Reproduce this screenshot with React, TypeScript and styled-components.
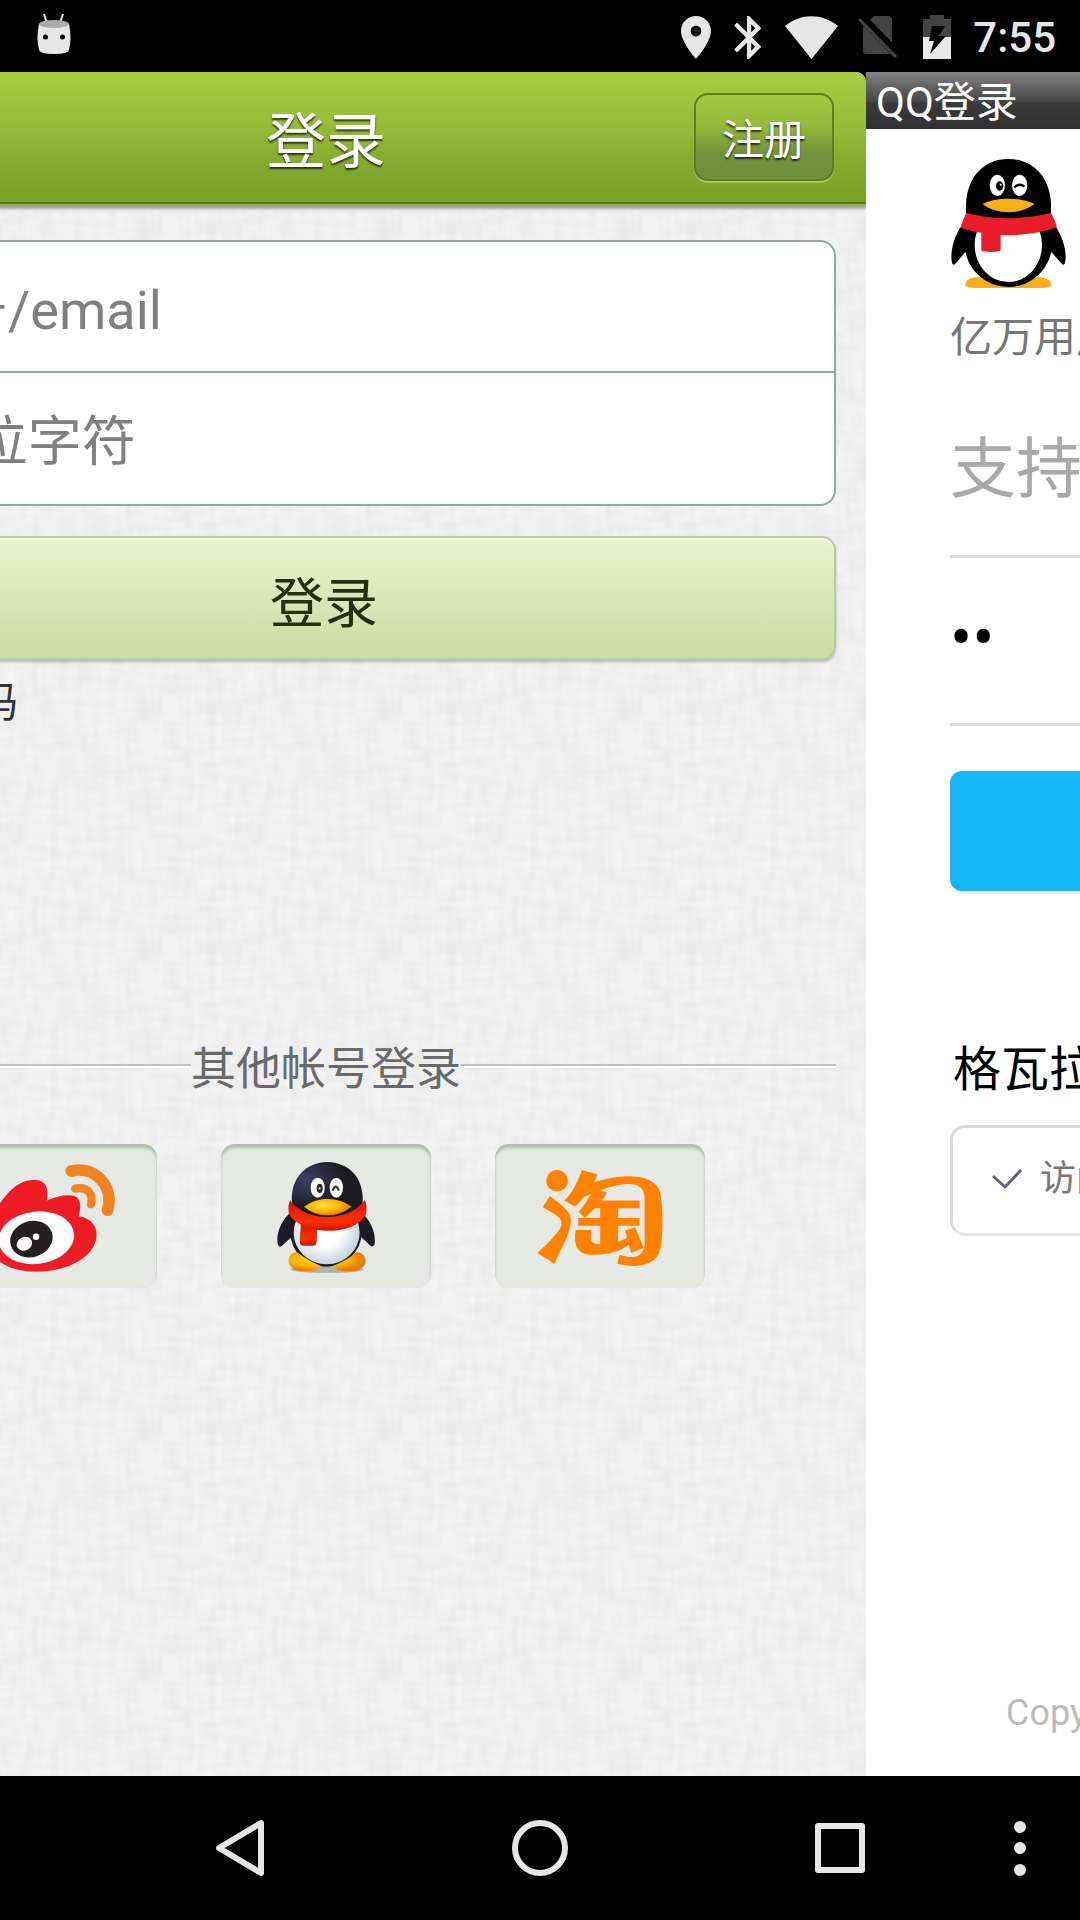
import React from "react";
import styled, { createGlobalStyle } from "styled-components";
import { AiOutlineTaobao } from "react-icons/ai";

const thread = (fx: string, fy: string, id: string) =>
  `<filter id='${id}' x='0' y='0' width='100%' height='100%'><feTurbulence type='fractalNoise' baseFrequency='${fx} ${fy}' numOctaves='2' seed='4' stitchTiles='stitch'/><feColorMatrix values='0 0 0 0 0  0 0 0 0 0  0 0 0 0 0  0.05 0 0 0 -0.015'/></filter><rect width='240' height='240' filter='url(#${id})'/>`;

const linen = `url("data:image/svg+xml,${encodeURIComponent(
  `<svg xmlns='http://www.w3.org/2000/svg' width='240' height='240'>${thread("0.03", "0.12", "h")}${thread("0.12", "0.03", "v")}</svg>`
).replace(/'/g, "%27")}")`;

const Global = createGlobalStyle`
  *, *::before, *::after { box-sizing: border-box; }
  html, body, #root { height: 100%; }
  body {
    margin: 0;
    background: #000;
    overflow: hidden;
    font-family: Roboto, "Noto Sans CJK SC", sans-serif;
  }
  button, input { font-family: inherit; }
  svg { display: block; flex: none; }
`;

const Screen = styled.div`
  display: flex;
  flex-direction: column;
  height: 100%;
  overflow: hidden;
`;

const StatusBar = styled.header`
  flex: none;
  display: flex;
  align-items: center;
  justify-content: space-between;
  height: 72px;
  padding: 2px 24px 0 36px;
  background: #000;
`;

const StatusGroup = styled.div`
  display: flex;
  align-items: center;
  gap: 20px;
`;

const Clock = styled.time`
  padding-top: 2px;
  color: #e6e6e6;
  font-size: 42px;
  font-weight: 500;
  line-height: 50px;
`;

const Stage = styled.main`
  flex: 1;
  min-height: 0;
  display: flex;
  overflow: hidden;
  background: #000;
`;

const Page = styled.section`
  flex: 0 0 100%;
  min-width: 0;
  display: flex;
  flex-direction: column;
  overflow: hidden;
`;

const LoginPage = styled(Page)`
  margin-left: -214px;
  border-radius: 0 10px 0 0;
  background: #f4f4f4 ${linen};
`;

const NavHeader = styled.div`
  flex: none;
  display: grid;
  grid-template-columns: 1fr auto 1fr;
  align-items: center;
  height: 134px;
  padding: 0 32px 4px;
  background: linear-gradient(#a7cc44, #9ac03b 32%, #81a92d 72%, #79a027);
  box-shadow: inset 0 -2px #98b83c, inset 0 -4px #557a14, 0 2px 2px #9c9c9c,
    0 4px 2px #cfcfcf;
`;

const NavTitle = styled.h1`
  grid-column: 2;
  margin: 0;
  padding-top: 12px;
  color: #fff;
  font-size: 60px;
  font-weight: 400;
  line-height: 72px;
  text-shadow: 0 2px 2px rgba(0, 0, 0, 0.7);
`;

const RegisterButton = styled.button`
  justify-self: end;
  width: 140px;
  height: 88px;
  padding: 8px 0 0;
  border: 2px solid #5c8217;
  border-radius: 14px;
  background: linear-gradient(#a3c941, #96bb3b 35%, #73933f 68%, #6a9238);
  box-shadow: 0 2px 1px #a9c56a;
  color: #fff;
  font-size: 42px;
  line-height: 50px;
  text-shadow: 0 2px 2px rgba(0, 0, 0, 0.7);
`;

const LoginForm = styled.form`
  display: flex;
  flex-direction: column;
  padding: 34px 30px 0;
`;

const Fields = styled.div`
  display: flex;
  flex-direction: column;
  border: 2px solid #90aa9f;
  border-radius: 16px;
  background: #fff;
  overflow: hidden;
`;

const Field = styled.input`
  height: 131px;
  padding: 7px 28px 0;
  border: 0;
  background: transparent;
  color: #333;
  font-size: 54px;
  outline: 0;
  &:first-child {
    border-bottom: 2px solid #90aa9f;
  }
  &::placeholder {
    color: #808080;
    opacity: 1;
  }
`;

const SubmitButton = styled.button`
  height: 124px;
  margin-top: 30px;
  padding: 14px 4px 0 0;
  border: 2px solid #bccb98;
  border-radius: 14px;
  background: linear-gradient(#e7f2cd, #dfecc0 30%, #cddea6 90%);
  box-shadow: inset 0 2px #f8fbef, 0 2px 3px rgba(0, 0, 0, 0.25);
  color: #263010;
  font-size: 54px;
  line-height: 60px;
`;

const ForgotLink = styled.a`
  align-self: flex-start;
  margin: 18px 0 0 34px;
  color: #333;
  font-size: 42px;
  line-height: 50px;
  text-decoration: none;
`;

const Divider = styled.div`
  display: flex;
  align-items: center;
  margin: 309px 30px 0;
  &::before,
  &::after {
    content: "";
    flex: 1;
    height: 4px;
    border-top: 2px solid #b9c6bd;
    border-bottom: 2px solid #fff;
  }
`;

const DividerText = styled.span`
  padding-top: 8px;
  color: #6a6a6a;
  font-size: 45px;
  line-height: 50px;
`;

const Providers = styled.div`
  display: flex;
  justify-content: center;
  gap: 64px;
  margin-top: 49px;
`;

const ProviderButton = styled.button`
  display: flex;
  align-items: center;
  justify-content: center;
  width: 210px;
  height: 144px;
  padding: 4px 0 0;
  border: 0;
  border-radius: 14px;
  background: #e6e9e3;
  box-shadow: inset 0 4px 3px #b3c0af, inset 0 0 2px #d9ddd6;
  color: #ff8200;
`;

const QQPage = styled(Page)`
  background: #fff;
`;

const TitleBar = styled.h2`
  flex: none;
  margin: 0;
  padding: 4px 0 0 10px;
  background: linear-gradient(#868686, #6a6a6a 20%, #464646 52%, #3a3a3a 54%, #313131);
  color: #fff;
  font-size: 42px;
  font-weight: 400;
  line-height: 53px;
`;

const QQBody = styled.form`
  flex: 1;
  display: flex;
  flex-direction: column;
  padding: 30px 84px 38px;
`;

const Slogan = styled.p`
  margin: 25px 0 0;
  color: #777;
  font-size: 42px;
  line-height: 50px;
  white-space: nowrap;
`;

const AccountField = styled.input`
  flex: none;
  height: 195px;
  padding: 20px 0 0;
  border: 0;
  border-bottom: 3px solid #ddd;
  background: transparent;
  color: #000;
  font-size: 66px;
  outline: 0;
  &::placeholder {
    color: #a9a9a9;
    opacity: 1;
  }
`;

const PasswordField = styled(AccountField)`
  height: 168px;
  padding: 0 0 4px;
`;

const BlueButton = styled.button`
  flex: none;
  height: 120px;
  margin-top: 45px;
  border: 0;
  border-radius: 12px;
  background: #14b7f8;
  color: #fff;
  font-size: 54px;
`;

const GrantTitle = styled.h3`
  margin: 149px 0 0 3px;
  color: #000;
  font-size: 48px;
  font-weight: 400;
  line-height: 60px;
  white-space: nowrap;
`;

const GrantBox = styled.label`
  flex: none;
  display: flex;
  align-items: center;
  gap: 18px;
  height: 111px;
  margin-top: 25px;
  padding: 0 0 4px 39px;
  border: 3px solid #d9d9d9;
  border-bottom-color: #e3e3e3;
  border-radius: 15px;
  color: #777;
  font-size: 36px;
  line-height: 42px;
  white-space: nowrap;
`;

const HiddenCheck = styled.input`
  position: absolute;
  opacity: 0;
  pointer-events: none;
`;

const Copyright = styled.p`
  margin: auto 0 0;
  padding-left: 56px;
  color: #bbb;
  font-size: 36px;
  line-height: 50px;
  white-space: nowrap;
`;

const SystemNav = styled.nav`
  flex: none;
  display: flex;
  height: 144px;
  padding: 0 30px 0 90px;
  background: #000;
`;

const NavKey = styled.button<{ $narrow?: boolean }>`
  flex: ${(p) => (p.$narrow ? "0 0 60px" : "1")};
  display: flex;
  align-items: center;
  justify-content: center;
  padding: 0;
  border: 0;
  background: transparent;
`;

const RobotIcon = () => (
  <svg width="36" height="48" viewBox="0 0 36 48">
    <path d="M8 1l3 9M27 1l-3 9" stroke="#e6e6e6" strokeWidth="2" />
    <path d="M3 11Q0 25 3 37Q4 41 18 41Q32 41 33 37Q36 25 33 11Z" fill="#e6e6e6" />
    <ellipse cx="18" cy="11" rx="15" ry="4" fill="#aaa" />
    <circle cx="9.500" cy="24" r="2.500" />
    <circle cx="26.500" cy="24" r="2.500" />
  </svg>
);

const LocationIcon = () => (
  <svg width="30" height="43" viewBox="5 2 14 20" fill="#e6e6e6">
    <path d="M12 2C8.13 2 5 5.13 5 9c0 5.25 7 13 7 13s7-7.75 7-13c0-3.87-3.13-7-7-7zm0 9.5c-1.38 0-2.500-1.120-2.500-2.500s1.120-2.500 2.500-2.500 2.500 1.120 2.500 2.500-1.120 2.500-2.500 2.500z" />
  </svg>
);

const BluetoothIcon = () => (
  <svg width="34" height="43" viewBox="4 2 15 20" fill="#e6e6e6">
    <path d="M17.710 7.710L12 2h-1v7.590L6.410 5 5 6.410 10.590 12 5 17.590 6.410 19 11 14.410V22h1l5.710-5.710-4.300-4.290 4.300-4.290zM13 5.830l1.880 1.880L13 9.590V5.830zm1.880 10.460L13 18.170v-3.760l1.880 1.880z" />
  </svg>
);

const WifiIcon = () => (
  <svg width="53" height="43" viewBox="0 0 53 43" fill="#e6e6e6">
    <path d="M0 10C16-3 37-3 53 10L26.500 43Z" />
  </svg>
);

const NoSimIcon = () => (
  <svg width="44" height="44" viewBox="0 0 44 44">
    <path d="M11 6L16 1H30Q34 1 34 5V36Q34 39 31 39H8Q5 39 5 36V12Z" fill="#444" />
    <path d="M3 2L40 40" stroke="#000" strokeWidth="9" />
    <path d="M1 4L38 42" stroke="#444" strokeWidth="3" />
  </svg>
);

const BatteryIcon = () => (
  <svg width="31" height="44" viewBox="0 0 31 44">
    <path d="M8 0H22V4H29V22H1V4H8Z" fill="#444" />
    <path d="M1 22H29V44H1Z" fill="#e9e9e9" />
    <path d="M10 11H23L17 21H24L8 39L12 26H7Z" fill="#000" />
  </svg>
);

const WeiboLogo = () => (
  <svg width="128" height="108" viewBox="0 0 384 325">
    <path
      d="M0 225C0 175 24 125 60 87C92 54 122 46 146 48C176 51 183 78 176 110C205 96 238 90 260 96C278 103 281 130 272 157C307 162 326 183 326 212C326 275 245 324 146 324C55 324 0 284 0 225Z"
      fill="#ee1c25"
    />
    <ellipse cx="145" cy="222" rx="114" ry="79" fill="#fff" transform="rotate(-7 145 222)" />
    <ellipse cx="130" cy="226" rx="65" ry="54" fill="#231f20" transform="rotate(-18 130 226)" />
    <ellipse cx="109" cy="240" rx="24" ry="20" fill="#fff" transform="rotate(-25 109 240)" />
    <circle cx="144" cy="219" r="10" fill="#fff" />
    <g fill="none" stroke="#f58220" strokeLinecap="round">
      <path d="M250 21C318 5 381 64 359 139" strokeWidth="35" />
      <path d="M262 74C298 66 318 92 309 121" strokeWidth="25" />
    </g>
  </svg>
);

const QQLogo = () => (
  <svg width="98" height="112" viewBox="0 0 294 336">
    <defs>
      <radialGradient id="foot" cx="0.4" cy="0.4" r="0.6">
        <stop offset="0" stopColor="#ffe03a" />
        <stop offset="0.6" stopColor="#ffb400" />
        <stop offset="1" stopColor="#e87800" />
      </radialGradient>
      <radialGradient id="belly" cx="0.45" cy="0.45" r="0.55">
        <stop offset="0.5" stopColor="#fff" />
        <stop offset="1" stopColor="#c5d2e0" />
      </radialGradient>
      <radialGradient id="head" cx="0.22" cy="0.32" r="0.5">
        <stop offset="0" stopColor="#3c3f68" />
        <stop offset="1" stopColor="#1c1b22" />
      </radialGradient>
      <linearGradient id="scarf" x1="0" x2="0" y1="0" y2="1">
        <stop offset="0" stopColor="#d41400" />
        <stop offset="0.7" stopColor="#ff2f05" />
        <stop offset="1" stopColor="#c41600" />
      </linearGradient>
    </defs>
    <ellipse cx="150" cy="322" rx="110" ry="11" fill="#8b8d88" opacity="0.6" />
    <path d="M42 150C12 175-3 215 2 246Q7 262 20 247L44 225L70 150ZM252 150C282 175 297 215 293 246Q287 262 272 243L252 225L226 150Z" fill="#1c1b26" />
    <ellipse cx="147" cy="212" rx="107" ry="102" fill="#1c1b26" />
    <path d="M34 296Q36 273 60 270Q92 296 132 312Q120 329 82 328Q36 325 34 296ZM266 296Q264 273 240 270Q208 296 168 312Q180 329 218 328Q264 325 266 296Z" fill="url(#foot)" />
    <ellipse cx="149" cy="212" rx="99" ry="95" fill="url(#belly)" />
    <path d="M45 120C40 48 88 0 151 0S262 48 257 120Q256 168 151 168Q48 168 45 120Z" fill="url(#head)" />
    <path d="M72 182L68 240Q68 251 80 251H108Q118 251 119 240L121 190Z" fill="url(#scarf)" />
    <path d="M40 115C85 182 215 182 263 115Q272 130 267 158C228 224 75 222 36 156Q31 130 40 115Z" fill="url(#scarf)" />
    <ellipse cx="122" cy="77" rx="21" ry="30" fill="#fff" />
    <ellipse cx="178" cy="77" rx="20" ry="30" fill="#fff" />
    <ellipse cx="128" cy="79" rx="9" ry="14" fill="#29251f" />
    <circle cx="128" cy="79" r="3" fill="#fff" />
    <path d="M167 86Q176 62 186 86" fill="none" stroke="#333" strokeWidth="7" />
    <path d="M81 134Q110 111 151 110Q195 111 224 134Q190 160 151 160Q112 160 81 134Z" fill="url(#foot)" />
  </svg>
);

const QQPenguin = () => (
  <svg width="117" height="129" viewBox="-3 0 351 387">
    <path d="M43 378Q45 354 85 354H260Q300 357 301 378Q298 387 272 387H74Q43 387 43 378Z" fill="#fbae17" />
    <path d="M28 205C10 235-4 278 3 312Q7 322 15 312L42 280L90 300V205ZM316 205C334 235 350 278 342 312Q338 322 330 312L302 280L250 300V205Z" />
    <ellipse cx="172" cy="254" rx="131" ry="130" />
    <ellipse cx="172" cy="258" rx="101" ry="111" fill="#fff" />
    <path d="M45 170V135C48 55 98 0 172 0S297 55 300 135V170Q172 190 45 170Z" />
    <path d="M46 162Q172 194 300 162Q312 182 318 205Q240 232 149 228V275Q120 283 91 275V221Q60 217 28 206Q34 184 46 162Z" fill="#ea1c29" />
    <ellipse cx="139" cy="79" rx="23" ry="32" fill="#fff" />
    <ellipse cx="206" cy="79" rx="23" ry="32" fill="#fff" />
    <ellipse cx="146" cy="81" rx="11" ry="14" />
    <circle cx="149" cy="77" r="3" fill="#fff" />
    <path d="M190 85Q206 70 220 83" fill="none" stroke="#000" strokeWidth="7" />
    <path d="M94 135Q125 119 172 119Q218 119 251 135Q215 160 172 160Q128 160 94 135Z" fill="#fbae17" />
  </svg>
);

const CheckIcon = () => (
  <svg width="30" height="22" viewBox="0 0 30 22" fill="none" stroke="#60637d" strokeWidth="3">
    <path d="M1 8L13 19L29 2" />
  </svg>
);

const BackIcon = () => (
  <svg width="50" height="58" viewBox="0 0 50 58" fill="none" stroke="#e6e6e6" strokeWidth="6" strokeLinejoin="round">
    <path d="M46 4V54L4 29Z" />
  </svg>
);

const HomeIcon = () => (
  <svg width="58" height="58" viewBox="0 0 58 58" fill="none" stroke="#e6e6e6" strokeWidth="6">
    <circle cx="29" cy="29" r="25" />
  </svg>
);

const RecentIcon = () => (
  <svg width="50" height="50" viewBox="0 0 50 50" fill="none" stroke="#e6e6e6" strokeWidth="6" strokeLinejoin="round">
    <rect x="3" y="3" width="44" height="44" />
  </svg>
);

const MoreIcon = () => (
  <svg width="12" height="56" viewBox="0 0 12 56" fill="#e6e6e6">
    <circle cx="6" cy="7" r="6" />
    <circle cx="6" cy="28" r="6" />
    <circle cx="6" cy="50" r="6" />
  </svg>
);

export default function App() {
  return (
    <Screen>
      <Global />
      <StatusBar>
        <RobotIcon />
        <StatusGroup>
          <LocationIcon />
          <BluetoothIcon />
          <WifiIcon />
          <NoSimIcon />
          <BatteryIcon />
          <Clock>7:55</Clock>
        </StatusGroup>
      </StatusBar>

      <Stage>
        <LoginPage>
          <NavHeader>
            <NavTitle>登录</NavTitle>
            <RegisterButton type="button">注册</RegisterButton>
          </NavHeader>
          <LoginForm onSubmit={(e) => e.preventDefault()}>
            <Fields>
              <Field type="text" aria-label="帐号" placeholder="手机号/email" />
              <Field type="password" aria-label="密码" placeholder="6~20位字符" />
            </Fields>
            <SubmitButton type="submit">登录</SubmitButton>
            <ForgotLink href="#forgot">忘记密码</ForgotLink>
          </LoginForm>
          <Divider>
            <DividerText>其他帐号登录</DividerText>
          </Divider>
          <Providers>
            <ProviderButton type="button" aria-label="微博">
              <WeiboLogo />
            </ProviderButton>
            <ProviderButton type="button" aria-label="QQ">
              <QQLogo />
            </ProviderButton>
            <ProviderButton type="button" aria-label="淘宝">
              <AiOutlineTaobao size={160} />
            </ProviderButton>
          </Providers>
        </LoginPage>

        <QQPage>
          <TitleBar>QQ登录</TitleBar>
          <QQBody onSubmit={(e) => e.preventDefault()}>
            <QQPenguin />
            <Slogan>亿万用户的共同选择</Slogan>
            <AccountField type="text" aria-label="QQ号" placeholder="支持QQ号/邮箱/手机号登录" />
            <PasswordField type="password" aria-label="QQ密码" defaultValue="12" />
            <BlueButton type="submit">登录</BlueButton>
            <GrantTitle>格瓦拉将获得以下权限：</GrantTitle>
            <GrantBox>
              <HiddenCheck type="checkbox" defaultChecked />
              <CheckIcon />
              访问你的个人信息
            </GrantBox>
            <Copyright>Copyright © Tencent. All Rights Reserved.</Copyright>
          </QQBody>
        </QQPage>
      </Stage>

      <SystemNav>
        <NavKey type="button" aria-label="返回"><BackIcon /></NavKey>
        <NavKey type="button" aria-label="主屏幕"><HomeIcon /></NavKey>
        <NavKey type="button" aria-label="最近任务"><RecentIcon /></NavKey>
        <NavKey type="button" aria-label="更多" $narrow><MoreIcon /></NavKey>
      </SystemNav>
    </Screen>
  );
}
